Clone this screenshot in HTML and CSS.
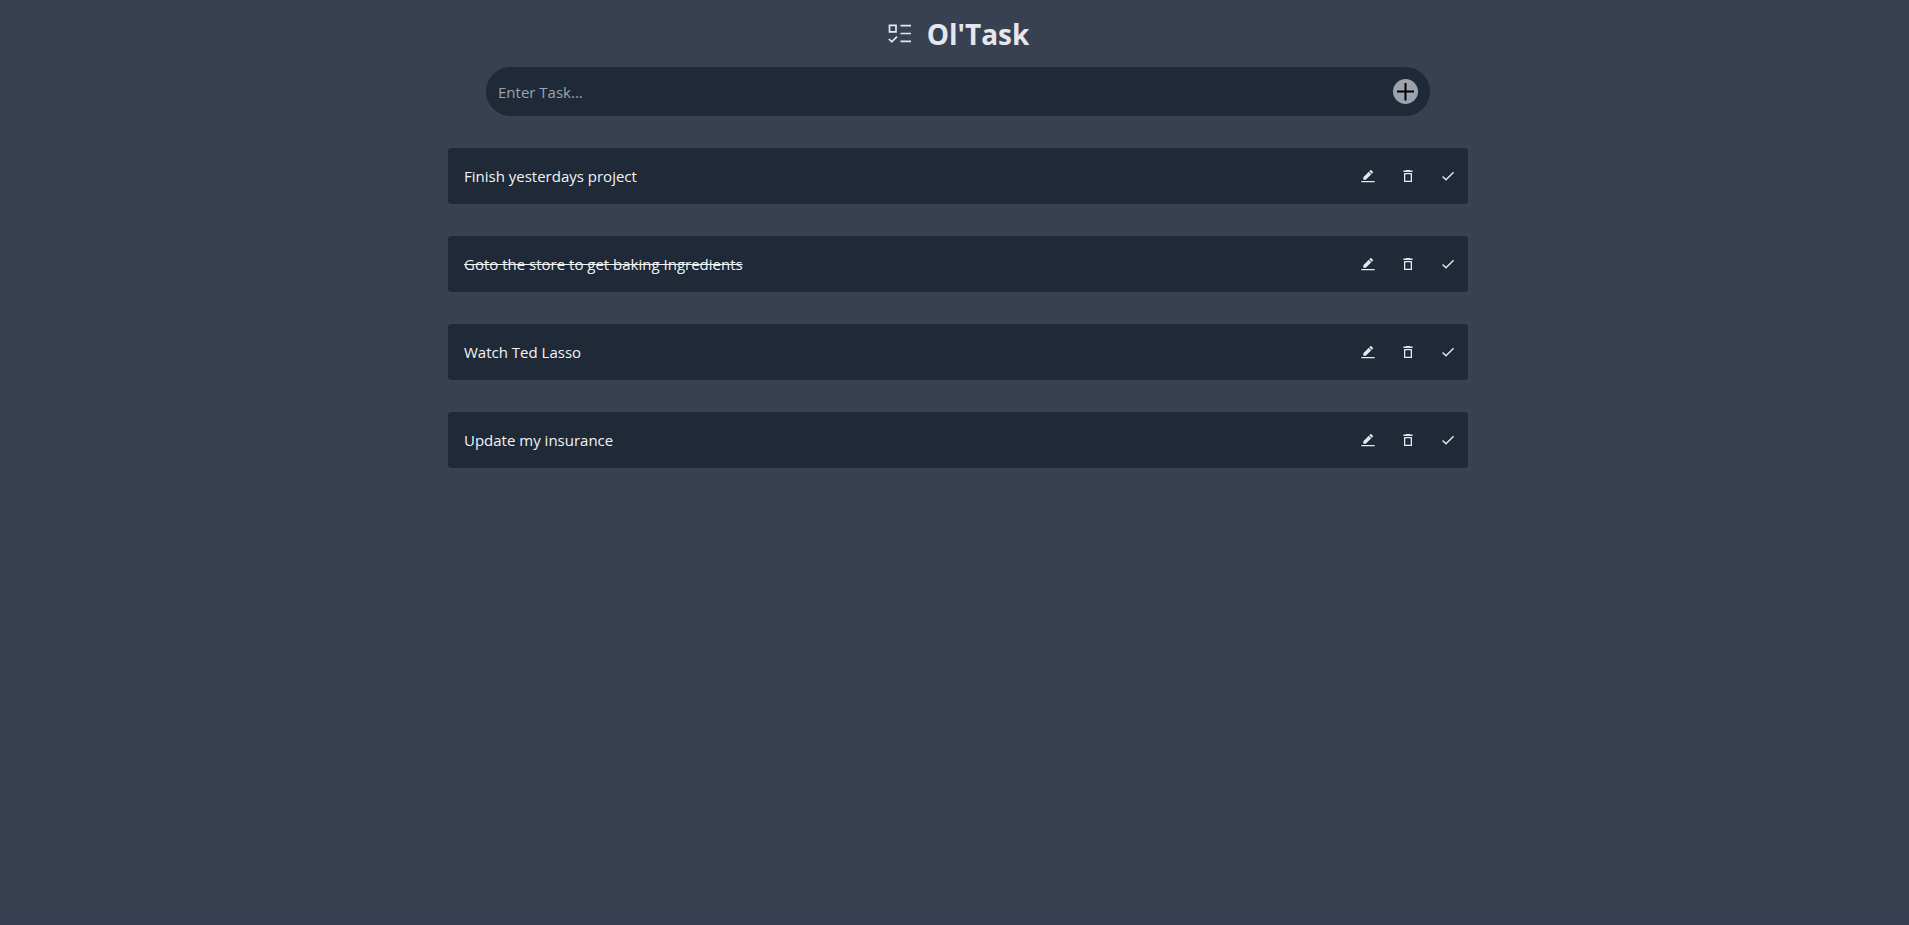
FILE: index.html
```
<!DOCTYPE html>
<html lang="en">
<head>
<meta charset="utf-8">
<meta name="viewport" content="width=device-width, initial-scale=1">
<title>Ol'Task</title>
<link rel="stylesheet" href="styles.css">
</head>
<body>
<svg class="sprite" aria-hidden="true">
  <symbol id="pen" viewBox="0 0 16 16"><path fill="currentColor" d="M3.3 9.2 8.8 3.7 11.3 6.2 5.8 11.7H3.3ZM9.3 3.2 10.8 1.7 13.3 4.2 11.8 5.7ZM1.3 13H14.7V14.2H1.3Z"/></symbol>
  <symbol id="trash" viewBox="0 0 16 16"><path fill="currentColor" fill-rule="evenodd" d="M6 2H10V2.6H12.6V4H3.4V2.6H6ZM4 5H12V14H4ZM5.3 6.2V12.8H10.7V6.2Z"/></symbol>
  <symbol id="check" viewBox="0 0 16 16"><path fill="none" stroke="currentColor" stroke-width="1.4" d="M2.6 8.4 6 11.8 13.6 4.2"/></symbol>
</svg>
<main class="app">
  <header class="header">
    <svg class="logo" viewBox="0 0 24 24" fill="none" stroke="currentColor" stroke-width="1.7" aria-hidden="true">
      <path d="M2.5 3.3H9V9.8H2.5ZM13.5 3.7H24M13.5 11.5H24M13.5 19.3H24M1.9 17 4.8 19.8 10 14.6"/>
    </svg>
    <h1 class="title">Ol'Task</h1>
  </header>
  <form class="entry">
    <input class="entry-input" type="text" placeholder="Enter Task..." aria-label="Enter Task">
    <button class="add" type="button" aria-label="Add task">
      <svg viewBox="0 0 25 25"><path fill="none" stroke="currentColor" stroke-width="2" d="M12.5 4V21.5M4 12.5H21"/></svg>
    </button>
  </form>
  <ul class="tasks">
    <li class="task"><span class="text">Finish yesterdays project</span>
      <button class="action" type="button" aria-label="Edit"><svg><use href="#pen"/></svg></button>
      <button class="action" type="button" aria-label="Delete"><svg><use href="#trash"/></svg></button>
      <button class="action" type="button" aria-label="Complete"><svg><use href="#check"/></svg></button></li>
    <li class="task"><span class="text done">Goto the store to get baking Ingredients</span>
      <button class="action" type="button" aria-label="Edit"><svg><use href="#pen"/></svg></button>
      <button class="action" type="button" aria-label="Delete"><svg><use href="#trash"/></svg></button>
      <button class="action" type="button" aria-label="Complete"><svg><use href="#check"/></svg></button></li>
    <li class="task"><span class="text">Watch Ted Lasso</span>
      <button class="action" type="button" aria-label="Edit"><svg><use href="#pen"/></svg></button>
      <button class="action" type="button" aria-label="Delete"><svg><use href="#trash"/></svg></button>
      <button class="action" type="button" aria-label="Complete"><svg><use href="#check"/></svg></button></li>
    <li class="task"><span class="text">Update my insurance</span>
      <button class="action" type="button" aria-label="Edit"><svg><use href="#pen"/></svg></button>
      <button class="action" type="button" aria-label="Delete"><svg><use href="#trash"/></svg></button>
      <button class="action" type="button" aria-label="Complete"><svg><use href="#check"/></svg></button></li>
  </ul>
</main>
</body>
</html>
```
FILE: styles.css
```
* { box-sizing: border-box; }
body {
  margin: 0;
  min-height: 100vh;
  padding-left: 7px;
  background: #384151;
  border-bottom: 4px solid #3a3f54;
  color: #e5e7eb;
  font-family: "Segoe UI", "Open Sans", "Noto Sans", sans-serif;
  font-size: 15px;
  line-height: 24px;
}
.sprite { position: absolute; width: 0; height: 0; }
.app { max-width: 1020px; margin: 0 auto; }
.header {
  display: flex;
  align-items: center;
  justify-content: center;
  gap: 16px;
  height: 67px;
}
.logo { width: 24px; height: 24px; }
.title { margin: 0; font-size: 28px; line-height: 36px; font-weight: 700; }
.entry {
  display: flex;
  align-items: center;
  margin: 0 38px 32px;
  height: 49px;
  padding: 0 12px;
  border-radius: 25px;
  background: #1f2937;
}
.entry-input {
  flex: 1;
  min-width: 0;
  padding: 0;
  border: 0;
  outline: 0;
  background: transparent;
  color: inherit;
  font: inherit;
}
.entry-input::placeholder { color: #9ca3af; opacity: 1; }
button { padding: 0; border: 0; cursor: pointer; }
button svg { display: block; width: 100%; height: 100%; }
.add { width: 25px; height: 25px; border-radius: 50%; background: #9ca3af; color: #000; }
.tasks {
  display: flex;
  flex-direction: column;
  gap: 32px;
  margin: 0;
  padding: 0;
  list-style: none;
}
.task {
  display: flex;
  align-items: center;
  gap: 24px;
  padding: 16px 12px 16px 16px;
  border-radius: 4px;
  background: #1f2937;
}
.text { flex: 1; color: #f3f4f6; }
.done { text-decoration: line-through; }
.action { width: 16px; height: 16px; background: transparent; color: #e5e7eb; }
```
